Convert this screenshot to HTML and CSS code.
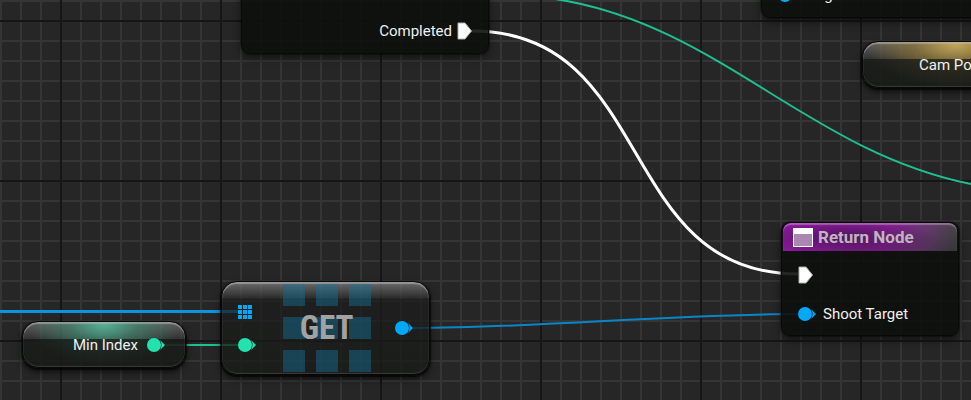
FILE: index.html
```html
<!DOCTYPE html>
<html lang="en">
<head>
<meta charset="utf-8">
<title>Blueprint graph</title>
<link rel="stylesheet" href="styles.css">
</head>
<body>
<main class="graph">
  <svg class="wires" aria-hidden="true">
    <path class="wire exec" d="M472 31C656 31 615 274 798 274"/>
    <path class="wire int" d="M555 -1C719 24 807 151 971 184"/>
    <path class="wire array" d="M0 311.5H238"/>
    <path class="wire int" d="M166 345H240"/>
    <path class="wire object" d="M413 328C540 328 670 314 800 314"/>
  </svg>

  <section class="node solid loop">
    <div class="row out"><span>Completed</span>
      <svg class="exec-pin" viewBox="0 0 16 18"><path d="M1 1H8L14.500 9L8 17H1Z"/></svg>
    </div>
  </section>

  <section class="node solid target">
    <div class="row">
      <svg class="pin blue" viewBox="0 0 20 14"><circle cx="7" cy="7" r="7"/><path d="M13 2L18 7L13 12Q16 7 13 2Z"/></svg>
      <span>Target</span>
    </div>
  </section>

  <section class="node glass variable cam">
    <span>Cam Po</span>
  </section>

  <section class="node solid return">
    <header class="title">
      <svg class="title-icon" viewBox="0 0 20 19"><path class="pane" d="M0 0H20V19H0Z"/><path class="frame" d="M0 0H20V19H0ZM1 6V18H19V6Z"/></svg>
      <h2>Return Node</h2>
    </header>
    <div class="row exec-row">
      <svg class="exec-pin" viewBox="0 0 16 18"><path d="M1 1H8L14.500 9L8 17H1Z"/></svg>
    </div>
    <div class="row">
      <svg class="pin blue" viewBox="0 0 20 14"><circle cx="7" cy="7" r="7"/><path d="M13 2L18 7L13 12Q16 7 13 2Z"/></svg>
      <span>Shoot Target</span>
    </div>
  </section>

  <section class="node glass variable min">
    <span>Min Index</span>
    <svg class="pin green" viewBox="0 0 20 14"><circle cx="7" cy="7" r="7"/><path d="M13 2L18 7L13 12Q16 7 13 2Z"/></svg>
  </section>

  <section class="node glass get">
    <div class="inputs">
      <svg class="array-pin" viewBox="0 0 14 14"><path d="M0 0h4v4h-4zM5 0h4v4h-4zM10 0h4v4h-4zM0 5h4v4h-4zM5 5h4v4h-4zM10 5h4v4h-4zM0 10h4v4h-4zM5 10h4v4h-4zM10 10h4v4h-4z"/></svg>
      <svg class="pin green" viewBox="0 0 20 14"><circle cx="7" cy="7" r="7"/><path d="M13 2L18 7L13 12Q16 7 13 2Z"/></svg>
    </div>
    <div class="tiles">
      <svg viewBox="0 0 88 88"><path d="M0 0h22v22h-22zM33 0h22v22h-22zM66 0h22v22h-22zM0 33h22v22h-22zM33 33h22v22h-22zM66 33h22v22h-22zM0 66h22v22h-22zM33 66h22v22h-22zM66 66h22v22h-22z"/></svg>
      <h2>GET</h2>
    </div>
    <svg class="pin blue" viewBox="0 0 20 14"><circle cx="7" cy="7" r="7"/><path d="M13 2L18 7L13 12Q16 7 13 2Z"/></svg>
  </section>
</main>
</body>
</html>
```
FILE: styles.css
```css
* { box-sizing: border-box; }

body {
  margin: 0;
  color: #f0f0f0;
  font: 15px/20px Roboto, sans-serif;
}

h2 { margin: 0; }
svg { display: block; flex: none; }

.graph {
  position: relative;
  height: 100vh;
  overflow: hidden;
  background-color: #262626;
  background-image:
    linear-gradient(90deg, #161616 2px, transparent 2px),
    linear-gradient(#161616 2px, transparent 2px),
    linear-gradient(90deg, #353535 2px, transparent 2px),
    linear-gradient(#353535 2px, transparent 2px);
  background-size: 160px 160px, 160px 160px, 20px 20px, 20px 20px;
  background-position: 60px 20px, 60px 20px, 0 0, 0 0;
}

.wires {
  position: absolute;
  inset: 0;
  width: 100%;
  height: 100%;
}
.wire { fill: none; stroke-width: 2; }
.wire.exec { stroke: #fff; stroke-width: 3; }
.wire.int { stroke: #1fbf8f; }
.wire.array { stroke: #0d94dc; stroke-width: 3; }
.wire.object { stroke: #0a85c8; }

.node {
  position: absolute;
  white-space: nowrap;
}
.solid {
  border: 1px solid #080908;
  border-radius: 9px;
  background: rgba(13, 16, 13, 0.9);
  box-shadow: 0 0 0 1px rgba(0, 0, 0, 0.3), 0 4px 8px rgba(0, 0, 0, 0.5);
}
.glass {
  display: flex;
  align-items: center;
  border: 1px solid #080808;
  border-radius: 16px;
  box-shadow: 0 1px 1px 1px rgba(0, 0, 0, 0.6), 0 4px 7px rgba(0, 0, 0, 0.6),
    inset 0 2px 1px rgba(190, 190, 190, 0.55), inset 0 -1px 1px rgba(120, 120, 120, 0.35);
}

.row {
  display: flex;
  align-items: center;
  gap: 5px;
  min-height: 20px;
}
.row.out { justify-content: flex-end; }

.exec-pin { width: 16px; height: 18px; fill: #fff; stroke: #b0b0b0; stroke-width: 1; }
.pin { width: 20px; height: 14px; }
.blue { fill: #00a8f8; }
.green { fill: #22e3ae; }
.array-pin { width: 14px; height: 14px; fill: #00a8f8; }

.loop { left: 241px; top: -40px; width: 248px; padding: 60px 15px 12px; }
.target { left: 761px; top: -70px; width: 248px; padding: 54px 16px 12px; }

.return { left: 781px; top: 222px; width: 178px; padding: 0 1px 11px; }
.return .row { padding-left: 15px; }
.return .exec-row { margin: 14px 0 19px; }
.title {
  display: flex;
  align-items: center;
  gap: 5px;
  height: 28px;
  padding-left: 10px;
  border-radius: 8px 8px 0 0;
  background:
    radial-gradient(ellipse 90px 20px at 64px 15px, rgba(20, 5, 25, 0.5), transparent),
    linear-gradient(170deg, transparent 55%, rgba(20, 20, 20, 0.3)),
    linear-gradient(95deg, #8e1aa0, #8c229c 60%, #65396d 82%, #444644 99%);
  box-shadow: inset 0 2px 1px rgba(230, 190, 235, 0.4);
}
.title h2 { color: #bdb5be; font-size: 17px; line-height: 20px; font-weight: 700; }
.title-icon { width: 20px; height: 19px; }
.pane { fill: #aa87b1; }
.frame { fill: #fff; fill-rule: evenodd; }

.variable { height: 47px; padding: 0 20px 0 50px; }
.min {
  left: 22px;
  top: 321px;
  width: 164px;
  gap: 9px;
  background:
    linear-gradient(transparent 37%, rgba(20, 22, 20, 0.72) 38%, rgba(22, 25, 22, 0.7)),
    radial-gradient(ellipse 76px 40px at 50% 2px, rgba(85, 185, 155, 0.9), rgba(65, 140, 115, 0.6) 45%, transparent),
    linear-gradient(rgba(120, 120, 120, 0.7), rgba(55, 58, 56, 0.6) 38%, rgba(25, 28, 25, 0.5));
}
.cam {
  left: 862px;
  top: 41px;
  width: 208px;
  padding-left: 56px;
  background:
    linear-gradient(transparent 37%, rgba(20, 22, 20, 0.72) 38%, rgba(22, 25, 22, 0.7)),
    radial-gradient(ellipse 90px 44px at 45% 2px, rgba(200, 170, 90, 0.95), rgba(150, 125, 55, 0.65) 45%, transparent),
    linear-gradient(rgba(120, 120, 120, 0.7), rgba(55, 58, 56, 0.6) 38%, rgba(25, 28, 25, 0.5));
}

.get {
  left: 221px;
  top: 281px;
  width: 209px;
  height: 94px;
  justify-content: space-between;
  padding: 0 14px 0 16px;
  background: linear-gradient(rgba(130, 130, 130, 0.75), rgba(48, 49, 48, 0.7) 17%, rgba(26, 27, 26, 0.7) 19%, rgba(24, 27, 24, 0.8));
}
.inputs { display: grid; gap: 19px; }
.tiles { display: grid; place-items: center; }
.tiles > * { grid-area: 1 / 1; }
.tiles svg { width: 88px; height: 88px; fill: rgba(20, 115, 155, 0.45); }
.tiles h2 {
  color: #a0a3a4;
  font: 700 33px/40px "Roboto Condensed", "Liberation Sans Narrow", Roboto, sans-serif;
}
```
